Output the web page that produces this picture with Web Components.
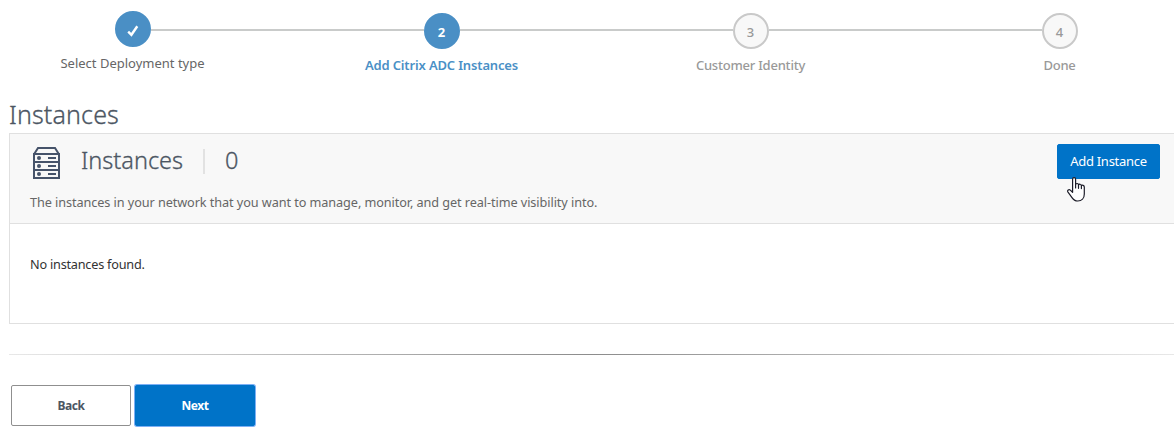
<!DOCTYPE html>
<html lang="en">
<head>
<meta charset="utf-8">
<title>Instances</title>
<style>
  html, body {
    margin: 0;
    height: 441px;
    overflow: hidden;
    background: #fff;
    font-family: "Noto Sans", sans-serif;
  }
</style>
</head>
<body>
<setup-page></setup-page>
<script>
class WizardStep extends HTMLElement {
    constructor() {
      super();
      this.shadow = this.attachShadow({ mode: "open" });
    }

    connectedCallback() {
      this.render();
    }

    render() {
      var state = this.getAttribute("state");
      var mark = state === "done"
        ? `<svg width="14" height="14" viewBox="0 0 14 14"><path d="M2.2 7.6 L5.4 10.8 L11.3 2.2" fill="none" stroke="#fff" stroke-width="2.4"/></svg>`
        : `<span>${this.getAttribute("number")}</span>`;

      this.shadow.innerHTML =
          `<style>
              :host {
                display: flex;
                flex-direction: column;
                align-items: center;
                padding-top: 2px;
                color: #999;
              }

              :host([state="done"]) {
                padding-top: 0;
                color: #666;
              }

              :host([state="current"]) {
                color: #4a90c6;
              }

              .track {
                display: flex;
                align-items: center;
                width: 100%;
                height: 36px;
              }

              /* the line sits at one height for every step */
              .track::before, .track::after {
                content: "";
                flex: 1;
                height: 2px;
                margin-top: -2px;
                background: #c9cbca;
              }

              :host([state="done"]) .track::after {
                margin-top: 2px;
              }

              :host([state="done"]) .track::before,
              :host([last]) .track::after {
                background: none;
              }

              .circle {
                display: flex;
                align-items: center;
                justify-content: center;
                box-sizing: border-box;
                width: 36px;
                height: 36px;
                border: 2px solid #c9c9c9;
                border-radius: 50%;
                background: #f8f8f8;
                font-size: 13px;
                font-weight: 500;
                padding-top: 1px;
                padding-right: 1px;
              }

              :host([state="done"]) .circle,
              :host([state="current"]) .circle {
                border-color: #4a8fc5;
                background: #4a8fc5;
                color: #fff;
                font-weight: 700;
              }

              :host([state="done"]) .circle {
                padding: 3px 0 0;
              }

              .label {
                margin: 7px 1px 0 0;
                font-size: 13px;
                line-height: 18px;
                font-weight: 500;
                white-space: nowrap;
                letter-spacing: -.22px;
              }

              :host([state="done"]) .label {
                font-weight: 400;
                letter-spacing: 0;
              }

              :host([state="current"]) .label {
                font-weight: 600;
                letter-spacing: -.15px;
              }
          </style>
          <div class="track"><div class="circle">${mark}</div></div>
          <div class="label"><slot></slot></div>`;
    }
}

customElements.define("wizard-step", WizardStep);

class ActionButton extends HTMLElement {
    constructor() {
      super();
      this.shadow = this.attachShadow({ mode: "open" });
    }

    connectedCallback() {
      this.render();
    }

    render() {
      this.shadow.innerHTML =
          `<style>
              :host {
                display: block;
                width: 120px;
                height: 41px;
              }

              button {
                display: block;
                box-sizing: border-box;
                width: 100%;
                height: 100%;
                padding: 0;
                border: 1px solid #8f8f8f;
                border-radius: 2px;
                background: #fff;
                color: #4c5663;
                font: 700 12px "Noto Sans", sans-serif;
                letter-spacing: -.4px;
              }

              :host([kind="primary"]) button {
                border-color: #0073c8;
                background: #0073c8;
                color: #fff;
              }

              :host([focused]) button {
                box-shadow: 0 0 0 1px #7db0f5;
              }

              :host([small]) {
                width: 103px;
                height: 35px;
              }

              :host([small]) button {
                padding-bottom: 2px;
                font-size: 13px;
                font-weight: 400;
                letter-spacing: -.27px;
              }
          </style>
          <button type="button"><slot></slot></button>`;
    }
}

customElements.define("action-button", ActionButton);

class ServerIcon extends HTMLElement {
    constructor() {
      super();
      this.shadow = this.attachShadow({ mode: "open" });
    }

    connectedCallback() {
      this.shadow.innerHTML =
          `<style>
              :host, svg {
                display: block;
                width: 27px;
                height: 32px;
              }
          </style>
          <svg viewBox="0 0 27 32" fill="none" stroke="#46536a" stroke-width="2">
            <path d="M1.2 7 L5 1 H22 L25.8 7"/>
            <path d="M1 7 H26 V31 H1 Z M1 15 H26 M1 23 H26"/>
            <path d="M15 11 H23 M15 19 H23 M15 27 H23"/>
            <g fill="#46536a" stroke="none">
              <circle cx="6" cy="11" r="2"/>
              <circle cx="6" cy="19" r="2"/>
              <circle cx="6" cy="27" r="2"/>
            </g>
          </svg>`;
    }
}

customElements.define("server-icon", ServerIcon);

class HandPointer extends HTMLElement {
    constructor() {
      super();
      this.shadow = this.attachShadow({ mode: "open" });
    }

    connectedCallback() {
      this.shadow.innerHTML =
          `<style>
              :host, svg {
                display: block;
                width: 18px;
                height: 25px;
              }
          </style>
          <svg viewBox="0 0 18 25" fill="#fff" stroke="#1c1c28" stroke-width="1.2" stroke-linejoin="round" stroke-linecap="round">
            <path d="M5.6 15.3 V2.2 C5.6 .2 8.6 .2 8.6 2.2 V7.6 C9.1 6 11.4 6.1 11.5 8 C12.1 6.8 14.3 7 14.4 8.7 C15.2 7.8 17.3 8.1 17.3 10.1 V17 C17.3 21.3 14.6 24 10.8 24 C7.7 24 6.3 22.7 5 20.6 L1 15.1 C-.1 13.5 1.9 12 3.3 13.1 Z"/>
            <path d="M8.6 7.6 V11 M11.5 8 V11.3 M14.4 8.7 V11.6" fill="none"/>
          </svg>`;
    }
}

customElements.define("hand-pointer", HandPointer);

class InstancePanel extends HTMLElement {
    constructor() {
      super();
      this.shadow = this.attachShadow({ mode: "open" });
    }

    connectedCallback() {
      this.render();
    }

    render() {
      this.shadow.innerHTML =
          `<style>
              :host {
                display: block;
                box-sizing: border-box;
                height: 191px;
                border: 1px solid #e0e0e0;
                border-right: 0;
              }

              header {
                box-sizing: border-box;
                height: 90px;
                padding: 10px 14px 0 20px;
                border-bottom: 1px solid #e0e0e0;
                background: #f8f8f8;
              }

              .bar {
                display: flex;
                height: 35px;
              }

              server-icon {
                margin: 3px 1px 0 3px;
              }

              .title, .count {
                color: #4c5663;
                font-size: 23.5px;
                font-weight: 300;
                line-height: 33px;
                -webkit-text-stroke: .3px #4c5663;
              }

              .title {
                width: 122px;
                margin-left: 20px;
              }

              .count {
                flex: 1;
                margin-left: 20px;
              }

              .divider {
                width: 2px;
                height: 25px;
                margin-top: 5px;
                background: #e2e2e2;
              }

              .add {
                position: relative;
              }

              hand-pointer {
                position: absolute;
                left: 10px;
                top: 32.5px;
              }

              .hint {
                margin-top: 14px;
                color: #666;
                font-size: 12.7px;
                line-height: 18px;
                white-space: nowrap;
                letter-spacing: -.08px;
              }

              .empty {
                padding: 31px 20px;
                color: #333;
                font-size: 12.7px;
                line-height: 18px;
                letter-spacing: -.22px;
              }
          </style>
          <header>
            <div class="bar">
              <server-icon></server-icon>
              <div class="title">Instances</div>
              <div class="divider"></div>
              <div class="count">${this.getAttribute("count")}</div>
              <div class="add">
                <action-button kind="primary" small>Add Instance</action-button>
                <hand-pointer></hand-pointer>
              </div>
            </div>
            <div class="hint"><slot name="hint"></slot></div>
          </header>
          <div class="empty"><slot></slot></div>`;
    }
}

customElements.define("instance-panel", InstancePanel);

class SetupPage extends HTMLElement {
    constructor() {
      super();
      this.shadow = this.attachShadow({ mode: "open" });
    }

    connectedCallback() {
      this.render();
    }

    render() {
      this.shadow.innerHTML =
          `<style>
              :host {
                display: flex;
                flex-direction: column;
                height: 441px;
                overflow: hidden;
              }

              nav {
                display: grid;
                grid-template-columns: repeat(4, 309px);
                height: 86px;
                margin-left: -21.5px;
                padding-top: 11px;
                box-sizing: border-box;
                flex: none;
              }

              main {
                padding-left: 9px;
              }

              h1 {
                margin: 10px 0 0;
                height: 37px;
                color: #4c5663;
                font-size: 25px;
                font-weight: 300;
                line-height: 36px;
                letter-spacing: .15px;
                -webkit-text-stroke: .3px #4c5663;
              }

              .rule {
                height: 1px;
                margin-top: 30px;
                background: linear-gradient(to right, #e8e8e8, #8c8c8c 50%, #e8e8e8);
              }

              footer {
                display: flex;
                gap: 4px;
                padding: 30px 0 0 2px;
              }
          </style>
          <nav>
            <wizard-step state="done">Select Deployment type</wizard-step>
            <wizard-step state="current" number="2">Add Citrix ADC Instances</wizard-step>
            <wizard-step number="3">Customer Identity</wizard-step>
            <wizard-step number="4" last>Done</wizard-step>
          </nav>
          <main>
            <h1>Instances</h1>
            <instance-panel count="0">
              <span slot="hint">The instances in your network that you want to manage, monitor, and get real-time visibility into.</span>
              No instances found.
            </instance-panel>
            <div class="rule"></div>
            <footer>
              <action-button>Back</action-button>
              <action-button kind="primary" focused>Next</action-button>
            </footer>
          </main>`;
    }
}

customElements.define("setup-page", SetupPage);
</script>
</body>
</html>
